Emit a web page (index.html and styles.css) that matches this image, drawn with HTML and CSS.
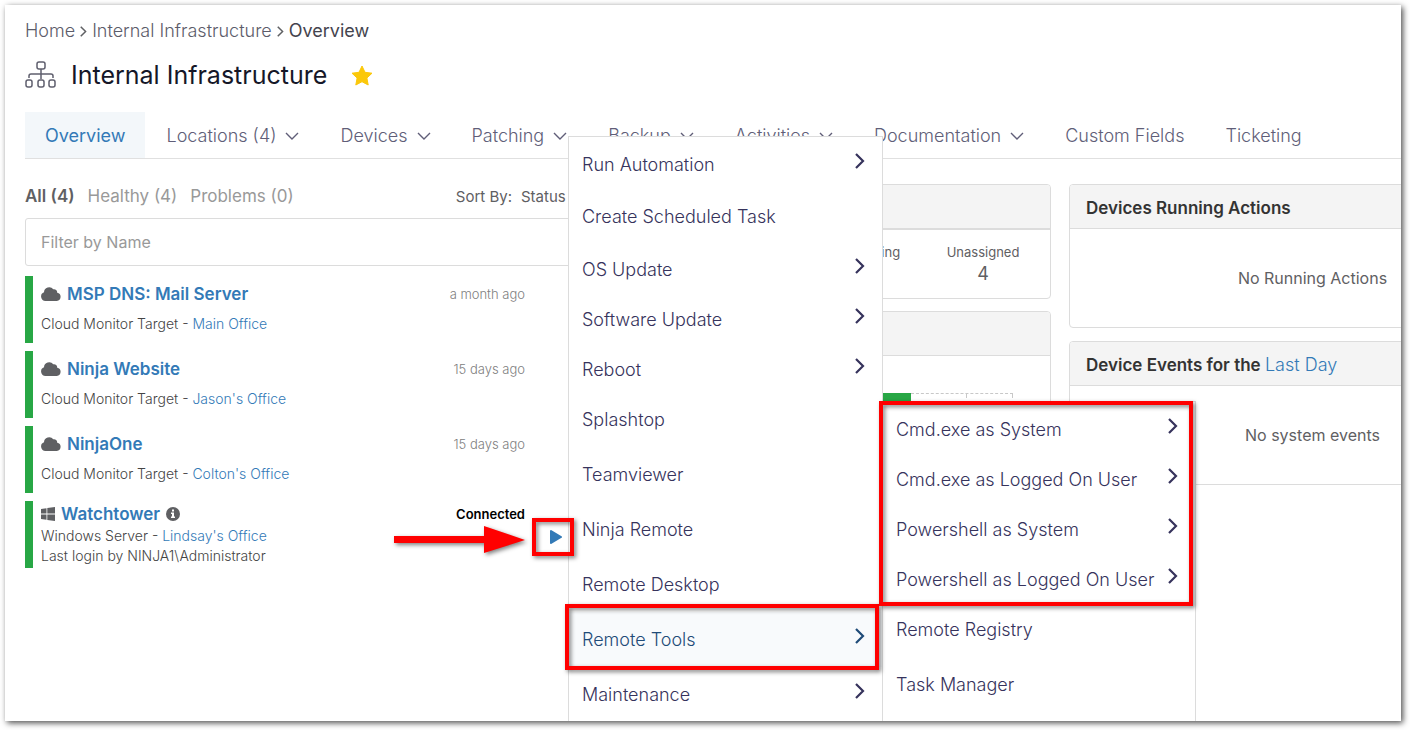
FILE: index.html
```html
<!DOCTYPE html>
<html lang="en">
  <head>
    <meta charset="UTF-8" />
    <meta name="viewport" content="width=device-width, initial-scale=1.0" />
    <title>Internal Infrastructure - Overview</title>
    <link rel="stylesheet" href="styles.css" />
  </head>
  <body>
    <!-- shared icons -->
    <svg class="sprite" aria-hidden="true">
      <symbol id="down" viewBox="0 0 14 8">
        <path d="M1 1l6 6 6-6" fill="none" stroke="currentColor" stroke-width="1.4" />
      </symbol>
      <symbol id="right" viewBox="0 0 10 16">
        <path d="M1 1l7 7-7 7" fill="none" stroke="currentColor" stroke-width="2.200" />
      </symbol>
      <symbol id="cloud" viewBox="0 0 20 14">
        <path d="M4.500 14A4.500 4.500 0 0 1 3 5.300 5.200 5.200 0 0 1 12.300 2.300 3.200 3.200 0 0 1 16.200 5.700 4.200 4.200 0 0 1 15.800 14z" fill="currentColor" />
      </symbol>
    </svg>

    <div class="window">
      <div class="page">
        <nav class="breadcrumb" aria-label="Breadcrumb">
          <a href="#">Home</a>
          <svg class="crumb-arrow"><use href="#right" /></svg>
          <a href="#">Internal Infrastructure</a>
          <svg class="crumb-arrow"><use href="#right" /></svg>
          <span class="current">Overview</span>
        </nav>

        <header class="title-row">
          <svg class="org-icon" viewBox="0 0 32 28" fill="none" stroke="currentColor" stroke-width="1.5">
            <rect x="12" y="1" width="8" height="7" rx="2" />
            <rect x="1" y="19" width="6" height="7" rx="2" />
            <rect x="13" y="19" width="6" height="7" rx="2" />
            <rect x="24" y="19" width="6" height="7" rx="2" />
            <path d="M16 8v10M4 17v-2q0-2 2-2h20q2 0 2 2v2" />
          </svg>
          <h1>Internal Infrastructure</h1>
          <svg class="star" viewBox="0 0 22 21">
            <path d="M11 1l3 6.300 7 .9-5.100 4.800 1.300 7L11 16.700 4.800 20l1.300-7L1 8.200l7-.9z" fill="currentColor" stroke="currentColor" stroke-linejoin="round" />
          </svg>
        </header>

        <nav class="tabs" aria-label="Sections">
          <a href="#" class="tab active">Overview</a>
          <a href="#" class="tab">Locations (4) <svg class="tab-arrow"><use href="#down" /></svg></a>
          <a href="#" class="tab">Devices <svg class="tab-arrow"><use href="#down" /></svg></a>
          <a href="#" class="tab">Patching <svg class="tab-arrow"><use href="#down" /></svg></a>
          <a href="#" class="tab">Backup <svg class="tab-arrow"><use href="#down" /></svg></a>
          <a href="#" class="tab">Activities <svg class="tab-arrow"><use href="#down" /></svg></a>
          <a href="#" class="tab">Documentation <svg class="tab-arrow"><use href="#down" /></svg></a>
          <a href="#" class="tab">Custom Fields</a>
          <a href="#" class="tab">Ticketing</a>
        </nav>

        <main class="dashboard">
          <section class="devices">
            <div class="filters">
              <button class="filter selected">All (4)</button>
              <button class="filter">Healthy (4)</button>
              <button class="filter">Problems (0)</button>
              <label for="sort" class="sort-label">Sort By:</label>
              <select id="sort" class="sort">
                <option>Status</option>
              </select>
            </div>
            <input type="text" class="search" placeholder="Filter by Name" aria-label="Filter by Name" />

            <ul class="device-list">
              <li class="device">
                <div class="info">
                  <a href="#" class="name"><svg class="cloud"><use href="#cloud" /></svg>MSP DNS: Mail Server</a>
                  <div class="detail">Cloud Monitor Target - <a href="#">Main Office</a></div>
                </div>
                <span class="time">a month ago</span>
              </li>
              <li class="device">
                <div class="info">
                  <a href="#" class="name"><svg class="cloud"><use href="#cloud" /></svg>Ninja Website</a>
                  <div class="detail">Cloud Monitor Target - <a href="#">Jason's Office</a></div>
                </div>
                <span class="time">15 days ago</span>
              </li>
              <li class="device">
                <div class="info">
                  <a href="#" class="name"><svg class="cloud"><use href="#cloud" /></svg>NinjaOne</a>
                  <div class="detail">Cloud Monitor Target - <a href="#">Colton's Office</a></div>
                </div>
                <span class="time">15 days ago</span>
              </li>
              <li class="device compact">
                <div class="info">
                  <a href="#" class="name">
                    <svg class="windows" viewBox="0 0 14 14" fill="currentColor">
                      <path d="M0 2l5.500-.8v5.400H0zM6.300 1.100L14 0v6.600H6.300zM0 7.400h5.500v5.400L0 12zM6.300 7.400H14V14l-7.700-1.100z" />
                    </svg>Watchtower
                    <svg class="about" viewBox="0 0 14 14">
                      <circle cx="7" cy="7" r="7" fill="currentColor" />
                      <path d="M6 2.500h2v2H6zM5 5.500h3v4h1V11H5V9.500h1V7H5z" fill="#fff" />
                    </svg>
                  </a>
                  <div class="detail">Windows Server - <a href="#">Lindsay's Office</a></div>
                  <div class="detail">Last login by NINJA1\Administrator</div>
                </div>
                <span class="time connected">Connected</span>
                <button class="play" aria-label="Run">
                  <svg viewBox="0 0 12 14"><path d="M1 1l10 6-10 6z" fill="currentColor" stroke="currentColor" stroke-width="2" stroke-linejoin="round" /></svg>
                </button>
              </li>
            </ul>
          </section>

          <section class="column">
            <div class="card">
              <div class="card-head double"></div>
              <div class="stats">
                <div class="stat">Pending</div>
                <div class="stat">Unassigned <strong>4</strong></div>
              </div>
            </div>
            <div class="card">
              <div class="card-head"></div>
              <div class="chart">
                <div class="chart-bar"></div>
                <div class="chart-grid"><span></span><span></span></div>
              </div>
            </div>
          </section>

          <section class="column">
            <div class="card">
              <h2 class="card-head">Devices Running Actions</h2>
              <div class="empty">No Running Actions</div>
            </div>
            <div class="card">
              <h2 class="card-head">Device Events for the&nbsp;<a href="#">Last Day</a></h2>
              <div class="empty">No system events</div>
            </div>
          </section>
        </main>
      </div>

      <div class="menu main-menu">
        <button class="item medium">Run Automation <svg><use href="#right" /></svg></button>
        <button class="item schedule">Create Scheduled Task</button>
        <button class="item">OS Update <svg><use href="#right" /></svg></button>
        <button class="item">Software Update <svg><use href="#right" /></svg></button>
        <button class="item">Reboot <svg><use href="#right" /></svg></button>
        <button class="item tall">Splashtop</button>
        <button class="item tall">Teamviewer</button>
        <button class="item tall">Ninja Remote</button>
        <button class="item tall">Remote Desktop</button>
        <button class="item tall hover">Remote Tools <svg><use href="#right" /></svg></button>
        <button class="item tall">Maintenance <svg><use href="#right" /></svg></button>
      </div>

      <div class="menu sub-menu">
        <button class="item">Cmd.exe as System <svg><use href="#right" /></svg></button>
        <button class="item">Cmd.exe as Logged On User <svg><use href="#right" /></svg></button>
        <button class="item">Powershell as System <svg><use href="#right" /></svg></button>
        <button class="item">Powershell as Logged On User <svg><use href="#right" /></svg></button>
        <button class="item tall">Remote Registry</button>
        <button class="item tall">Task Manager</button>
      </div>

      <!-- callouts -->
      <svg class="arrow" viewBox="0 0 132 28">
        <path d="M0 10h90V0l41 14-41 13V17H0z" fill="red" />
      </svg>
      <div class="mark mark-play"></div>
      <div class="mark mark-tools"></div>
      <div class="mark mark-shells"></div>
    </div>
  </body>
</html>
```
FILE: styles.css
```css
* {
  box-sizing: border-box;
}
body {
  margin: 0;
  padding: 5px 9px 9px 5px;
  height: 100vh;
  font-family: Inter, "Liberation Sans", sans-serif;
  color: #5f6063;
  background-color: #fff;
}
a {
  color: #337ab7;
  text-decoration: none;
}
button {
  font-family: inherit;
  border: none;
  background: none;
  padding: 0;
  cursor: pointer;
}
.sprite {
  display: none;
}
.window {
  position: relative;
  height: 100%;
  overflow: hidden;
  background-color: #fff;
  box-shadow: 2px 2px 6px rgba(0, 0, 0, 0.7);
}
/* wide desktop layout, the right column runs past the window */
.page {
  min-width: 1551px;
  padding: 14px 0 0 20px;
}

/* header */
.breadcrumb {
  display: flex;
  align-items: center;
  gap: 5px;
  font-size: 18px;
  font-weight: 300;
  line-height: 24px;
}
.breadcrumb a {
  color: #5c5c6a;
}
.crumb-arrow {
  width: 7px;
  height: 11px;
}
.current {
  font-weight: 400;
  color: #44444e;
}
.title-row {
  display: flex;
  align-items: center;
  margin: 16px 0 21px;
  height: 32px;
}
.org-icon {
  width: 32px;
  height: 28px;
  color: #5f5f6e;
}
h1 {
  margin: 0 24px 0 14px;
  font-size: 25px;
  font-weight: 400;
  line-height: 32px;
  color: #151728;
}
.star {
  width: 22px;
  height: 21px;
  color: #fbc80a;
}
.tabs {
  display: flex;
  gap: 1px;
  border-bottom: 1px solid #e0e0e0;
}
.tab {
  display: flex;
  align-items: center;
  gap: 9px;
  height: 46px;
  padding: 2px 20px 0;
  font-size: 18px;
  font-weight: 300;
  line-height: 24px;
  color: #605e78;
}
.tab.active {
  font-weight: 400;
  color: #337ab7;
  background-color: #f3f7fa;
}
.tab-arrow {
  width: 14px;
  height: 8px;
}

/* columns */
.dashboard {
  display: grid;
  grid-template-columns: 560px 1fr 487px;
  gap: 18px;
  align-items: start;
  padding-top: 25px;
}
.filters {
  display: flex;
  align-items: center;
  gap: 13px;
  height: 24px;
}
.filter {
  font-size: 17px;
  color: #999;
}
.filter.selected {
  font-weight: 600;
  color: #5f6063;
}
.sort-label {
  margin-left: auto;
  font-size: 15px;
}
.sort {
  appearance: none;
  border: none;
  margin-left: -4px;
  padding: 0;
  width: 64px;
  font-family: inherit;
  font-size: 15px;
  color: #5f6063;
  background: none;
}
.search {
  width: 100%;
  height: 48px;
  margin-top: 10px;
  padding: 0 15px;
  border: 1px solid #dcdcdc;
  border-radius: 3px;
  font-family: inherit;
  font-size: 16px;
}
.search::placeholder {
  color: #999;
}

/* device list */
.device-list {
  display: flex;
  flex-direction: column;
  gap: 8px;
  margin: 10px 0 0;
  padding: 0 60px 0 0;
  list-style: none;
}
.device {
  display: flex;
  position: relative;
  height: 67px;
  padding: 6px 0 0 8px;
  border-left: 8px solid #28a745;
}
.info {
  flex: 1;
}
.name {
  display: flex;
  align-items: center;
  gap: 6px;
  margin-bottom: 8px;
  font-size: 17px;
  font-weight: 600;
  line-height: 24px;
}
.cloud {
  width: 20px;
  height: 14px;
  color: #5f6063;
}
.windows,
.about {
  width: 14px;
  height: 14px;
  color: #5f6063;
}
.detail {
  font-size: 14px;
  font-weight: 300;
  line-height: 20px;
  color: #444;
}
.time {
  font-size: 13px;
  font-weight: 300;
  line-height: 24px;
  color: #808080;
}
.connected {
  font-weight: 600;
  color: #000;
}
.compact {
  padding-top: 1px;
}
.compact .name {
  margin-bottom: 0;
}
.play {
  position: absolute;
  top: 29px;
  right: -37px;
  width: 12px;
  height: 14px;
  color: #337ab7;
}
.play svg {
  display: block;
}

/* cards */
.column {
  display: flex;
  flex-direction: column;
  gap: 13px;
}
.card {
  border: 1px solid #dcdcdc;
  border-radius: 4px;
  overflow: hidden;
}
.card-head {
  display: flex;
  align-items: center;
  height: 44px;
  margin: 0;
  padding: 2px 16px 0;
  border-bottom: 1px solid #dcdcdc;
  font-size: 17px;
  font-weight: 600;
  color: #333;
  background-color: #f4f4f4;
}
.card-head.double {
  height: 45px;
  border-bottom-width: 2px;
}
.card-head a {
  font-size: 18px;
  font-weight: 300;
}
.stats {
  display: flex;
  justify-content: flex-end;
  height: 68px;
  padding: 12px 13px 0 0;
}
.stat {
  width: 108px;
  font-size: 13px;
  line-height: 21px;
  text-align: center;
}
.stat strong {
  display: block;
  font-size: 18px;
  font-weight: 400;
}
.column:nth-child(2) {
  gap: 12px;
}
.chart {
  display: flex;
  height: 150px;
  padding: 37px 37px 0 0;
}
.chart-bar {
  flex: 1;
  height: 30px;
  background-color: #28a745;
}
.chart-grid {
  display: flex;
  justify-content: flex-end;
  width: 102px;
  height: 5px;
  border-top: 1px dashed #c8c8c8;
}
.chart-grid span {
  width: 46px;
  border-right: 1px solid #c8c8c8;
}
.empty {
  font-size: 16px;
  line-height: 98px;
  text-align: center;
}

/* context menus */
.menu {
  position: absolute;
  bottom: 0;
  display: flex;
  flex-direction: column;
  border: 1px solid #dcdcdc;
  border-bottom: none;
  overflow: hidden;
  background-color: #fff;
}
.main-menu {
  top: 131px;
  left: 563px;
  width: 315px;
}
.sub-menu {
  top: 396px;
  left: 877px;
  width: 314px;
}
.item {
  display: flex;
  flex-shrink: 0;
  justify-content: space-between;
  height: 50px;
  padding: 17px 17px 0 13px;
  font-size: 18px;
  font-weight: 300;
  line-height: 21px;
  text-align: left;
  color: #36335c;
}
.item svg {
  width: 10px;
  height: 16px;
  margin-top: -1px;
}
.item.medium {
  height: 52px;
}
.item.schedule {
  height: 53px;
}
.item.tall {
  height: 55px;
}
.item.hover {
  color: #1f4b78;
  background-color: #f8fafc;
}

/* callouts */
.mark {
  position: absolute;
  border: 4px solid #f00;
  filter: drop-shadow(2px 2px 2px rgba(0, 0, 0, 0.5));
}
.mark-play {
  top: 513px;
  left: 527px;
  width: 42px;
  height: 38px;
}
.mark-tools {
  top: 599px;
  left: 560px;
  width: 314px;
  height: 66px;
}
.mark-shells {
  top: 396px;
  left: 874px;
  width: 314px;
  height: 205px;
}
.arrow {
  position: absolute;
  top: 521px;
  left: 389px;
  width: 132px;
  height: 28px;
  overflow: visible;
  filter: drop-shadow(2px 2px 2px rgba(0, 0, 0, 0.5));
}
```
